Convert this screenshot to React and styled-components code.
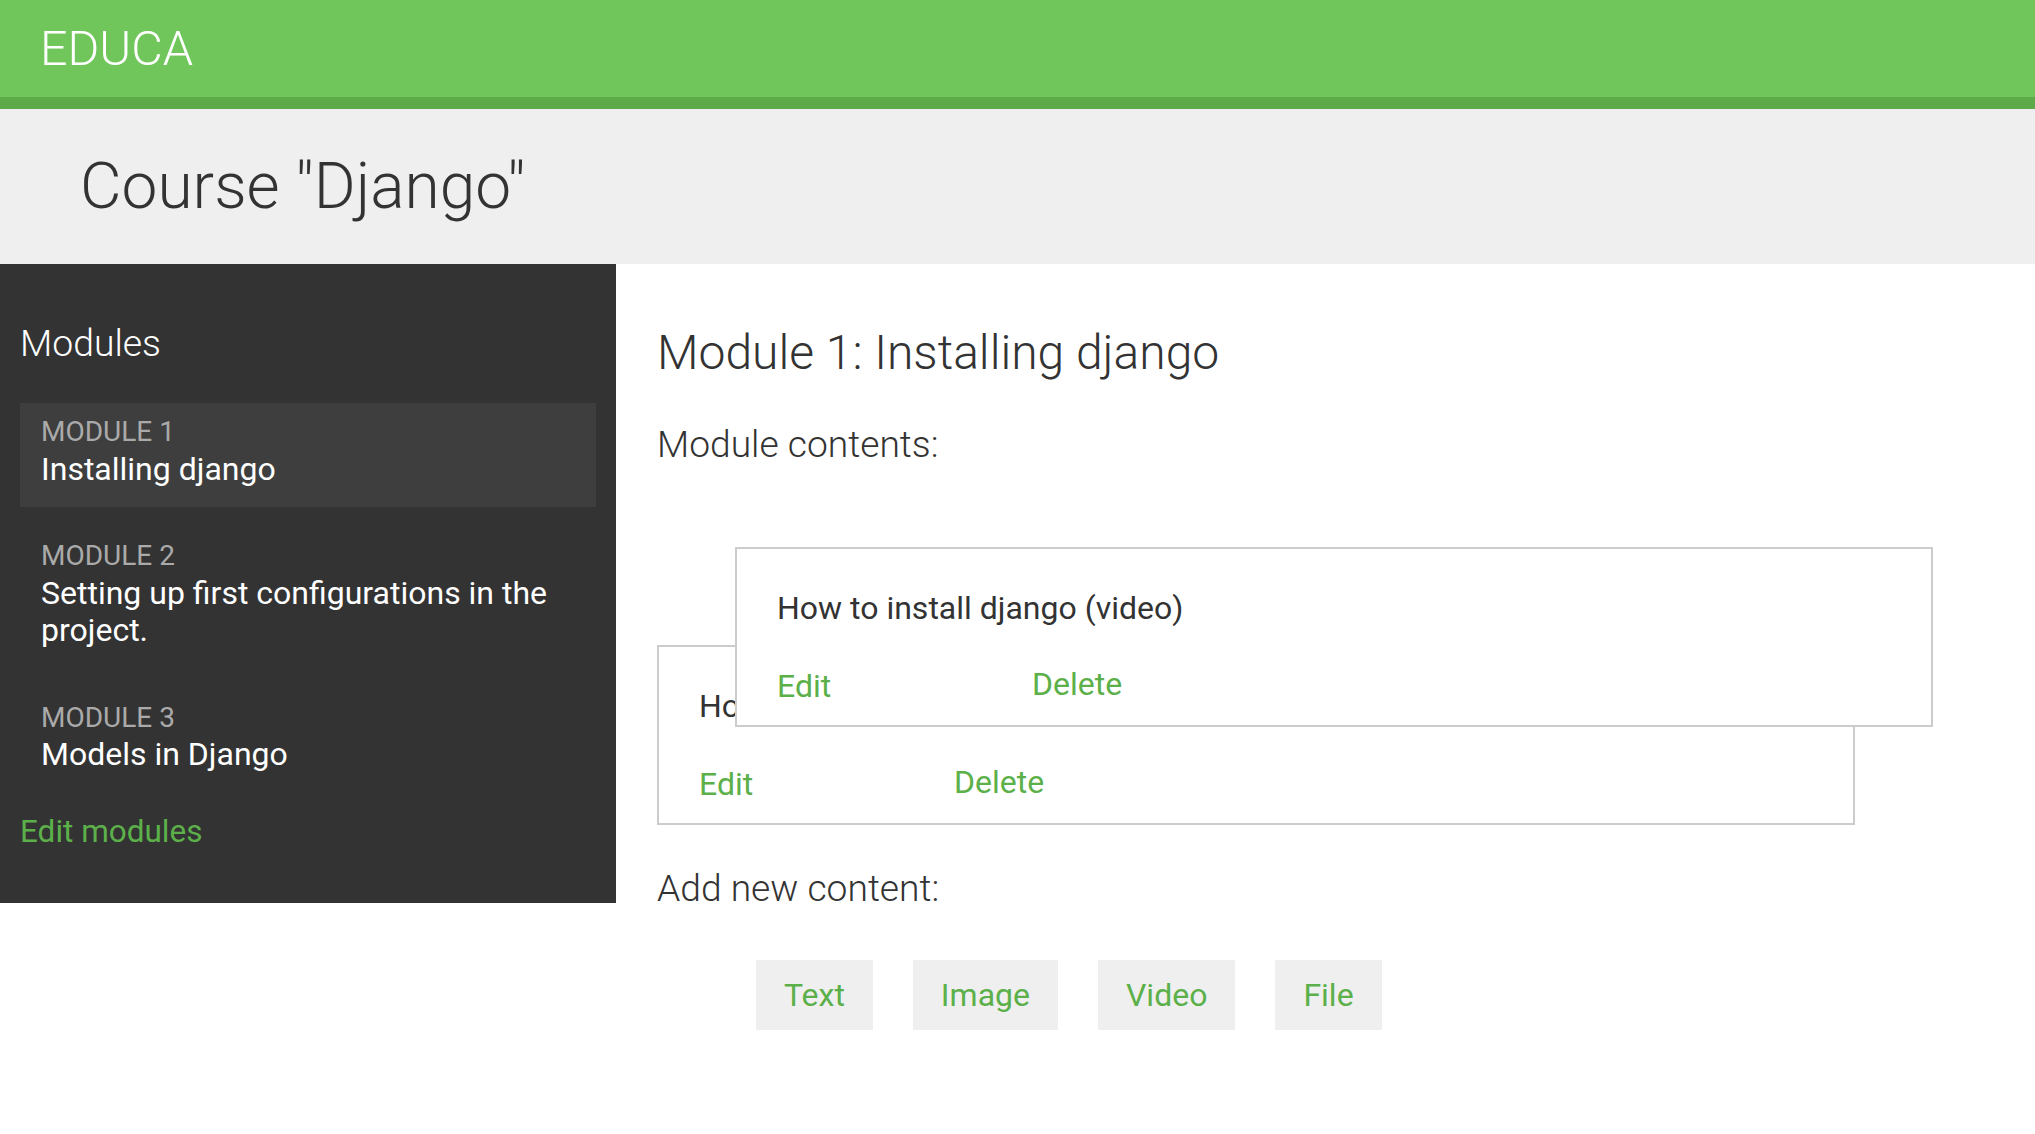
import React from "react";
import styled, { createGlobalStyle } from "styled-components";

const GlobalStyle = createGlobalStyle`
  html, body {
    margin: 0;
    padding: 0;
    background: #ffffff;
    font-family: Roboto, "Noto Sans", "Liberation Sans", sans-serif;
    color: #333333;
  }
  * { box-sizing: border-box; }
`;

const Header = styled.header`
  height: 109px;
  background: #70c65a;
  border-bottom: 12px solid #5eaa4a;
  padding-left: 40px;
`;

const Logo = styled.a`
  display: block;
  font-size: 48.5px;
  font-weight: 300;
  line-height: 97px;
  color: #ffffff;
  text-decoration: none;
`;

const TitleBar = styled.div`
  height: 155px;
  background: #efefef;
  padding-left: 80px;
`;

const PageTitle = styled.h1`
  margin: 0;
  font-size: 64px;
  font-weight: 300;
  line-height: 155px;
  color: #333333;
`;

const Body = styled.div`
  display: flex;
  align-items: flex-start;
`;

const Sidebar = styled.aside`
  width: 616px;
  flex: 0 0 616px;
  background: #333333;
  padding: 57px 20px 53px 20px;
`;

const SideTitle = styled.h3`
  margin: 0 0 38px 0;
  font-size: 37.3px;
  font-weight: 300;
  line-height: 44px;
  color: #ffffff;
`;

const ModuleList = styled.ul`
  list-style: none;
  margin: 0;
  padding: 0;
  display: flex;
  flex-direction: column;
  gap: 20px;
`;

const ModuleItem = styled.li`
  padding: 10px 20px 19px 21px;
  background: ${(p) => (p.$selected ? "#3e3e3e" : "transparent")};
`;

const ModuleLabel = styled.span`
  display: block;
  font-size: 28px;
  line-height: 37.5px;
  color: #aaaaaa;
  text-transform: uppercase;
`;

const ModuleName = styled.span`
  display: block;
  font-size: 32px;
  line-height: 37.5px;
  color: #ffffff;
`;

const SideLink = styled.a`
  display: block;
  margin-top: 20px;
  font-size: 31.5px;
  font-weight: 400;
  line-height: 37.5px;
  color: #5cb04a;
  text-decoration: none;
`;

const Main = styled.main`
  flex: 1;
  padding: 60.6px 180px 80px 41px;
`;

const ModuleHeading = styled.h2`
  margin: 0;
  font-size: 48px;
  font-weight: 300;
  line-height: 56px;
  color: #333333;
`;

const SectionLabel = styled.h3`
  margin: ${(p) => p.$margin};
  font-size: 37.2px;
  font-weight: 300;
  line-height: 44px;
  color: #333333;
`;

const ContentList = styled.div`
  position: relative;
  margin-top: 179.7px;
`;

const ContentBox = styled.div`
  background: #ffffff;
  border: 2px solid #cccccc;
  padding: 41px 40px 20px;
`;

const DraggedBox = styled(ContentBox)`
  position: absolute;
  top: -98px;
  left: 78px;
  width: 100%;
  z-index: 2;
`;

const ContentTitle = styled.p`
  margin: 0 0 40px;
  font-size: 32px;
  line-height: 37.5px;
  color: #333333;
`;

const Actions = styled.div`
  display: grid;
  grid-template-columns: 255px auto;
  align-items: start;
`;

const ActionLink = styled.a`
  font-size: 32px;
  line-height: 37.5px;
  color: #5cb04a;
  text-decoration: none;
  justify-self: start;
`;

const ActionButton = styled.button`
  justify-self: start;
  margin-top: -2px;
  padding: 0;
  border: none;
  background: none;
  font-family: inherit;
  font-size: 32px;
  line-height: 37.5px;
  color: #5cb04a;
  cursor: pointer;
`;

const ButtonRow = styled.ul`
  list-style: none;
  margin: 50.7px 0 0;
  padding: 0 0 0 99px;
  display: flex;
  gap: 40px;
`;

const AddButton = styled.a`
  display: block;
  padding: 16.25px 28px;
  background: #efefef;
  font-size: 32px;
  line-height: 37.5px;
  color: #5cb04a;
  text-decoration: none;
`;

const modules = [
  { n: 1, title: "Installing django", selected: true },
  { n: 2, title: "Setting up first configurations in the project." },
  { n: 3, title: "Models in Django" },
];

function Content({ Box }) {
  return (
    <Box>
      <ContentTitle>How to install django (video)</ContentTitle>
      <Actions>
        <ActionLink href="#">Edit</ActionLink>
        <ActionButton type="button">Delete</ActionButton>
      </Actions>
    </Box>
  );
}

export default function App() {
  return (
    <>
      <GlobalStyle />
      <Header>
        <Logo href="#">EDUCA</Logo>
      </Header>
      <TitleBar>
        <PageTitle>Course "Django"</PageTitle>
      </TitleBar>
      <Body>
        <Sidebar>
          <SideTitle>Modules</SideTitle>
          <ModuleList>
            {modules.map((m) => (
              <ModuleItem key={m.n} $selected={m.selected}>
                <ModuleLabel>Module {m.n}</ModuleLabel>
                <ModuleName>{m.title}</ModuleName>
              </ModuleItem>
            ))}
          </ModuleList>
          <SideLink href="#">Edit modules</SideLink>
        </Sidebar>
        <Main>
          <ModuleHeading>Module 1: Installing django</ModuleHeading>
          <SectionLabel $margin="41px 0 0">Module contents:</SectionLabel>
          <ContentList>
            <Content Box={ContentBox} />
            <Content Box={DraggedBox} />
          </ContentList>
          <SectionLabel $margin="40.3px 0 0">Add new content:</SectionLabel>
          <ButtonRow>
            {["Text", "Image", "Video", "File"].map((t) => (
              <li key={t}>
                <AddButton href="#">{t}</AddButton>
              </li>
            ))}
          </ButtonRow>
        </Main>
      </Body>
    </>
  );
}
